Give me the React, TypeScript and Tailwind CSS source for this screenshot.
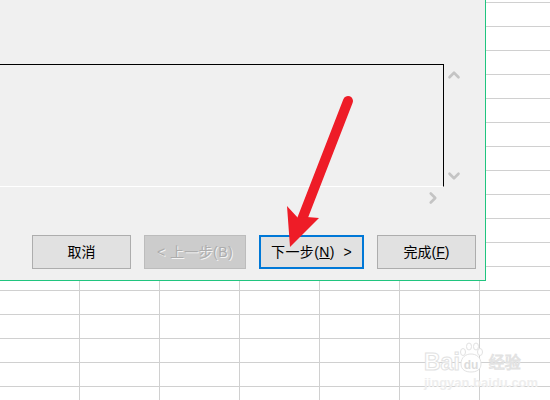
import type { ReactNode } from 'react';
import { ChevronDown, ChevronRight, ChevronUp } from 'lucide-react';

const cells = Array.from({ length: 7 * 18 });

function WizardButton({ children, className }: { children: ReactNode; className: string }) {
  return (
    <button type="button" className={`flex h-[34px] items-center justify-center text-[14px] ${className}`}>
      {children}
    </button>
  );
}

export default function App() {
  return (
    <div className="relative h-[400px] w-[550px] overflow-hidden bg-white font-['Liberation_Sans','Noto_Sans_CJK_SC',sans-serif]">
      {/* spreadsheet behind the dialog */}
      <div className="grid grid-cols-[repeat(7,80px)] grid-rows-[3px_repeat(17,24px)]">
        {cells.map((_, i) => (
          <div key={i} className="border-r border-b border-[#d0d0d0]" />
        ))}
      </div>

      {/* wizard dialog */}
      <div className="absolute top-0 left-0 flex h-[281px] w-[486px] flex-col border-r border-b border-[#20c57f] bg-[#f0f0f0] pt-[64px]">
        <div className="flex">
          <div className="h-[123px] w-[444px] border-t border-r border-b border-t-black border-r-black border-b-white" />
          <div className="flex h-[123px] w-[20px] flex-col items-center justify-between pt-[2px] pb-[2px] text-[#c4c4c4]">
            <ChevronUp size={18} strokeWidth={3.5} />
            <ChevronDown size={18} strokeWidth={3.5} />
          </div>
        </div>
        <div className="flex w-[444px] justify-end pt-[2px] pr-[2px] text-[#c4c4c4]">
          <ChevronRight size={18} strokeWidth={3.5} />
        </div>
        <div className="mt-[28px] flex justify-end gap-[13px] pr-[9px]">
          <WizardButton className="w-[99px] border border-[#adadad] bg-[#e1e1e1] text-black">取消</WizardButton>
          <WizardButton className="w-[102px] border border-[#bcbcbc] bg-[#cccccc] tracking-[0.4px] text-[#adadad] [text-shadow:1px_1px_0_#f4f4f4]">
            &lt; 上一步(B)
          </WizardButton>
          <WizardButton className="w-[105px] border-2 border-[#0078d7] bg-[#e1e1e1] tracking-[0.4px] text-black">
            下一步(<span className="underline">N</span>)&nbsp;&nbsp;&gt;
          </WizardButton>
          <WizardButton className="w-[99px] border border-[#adadad] bg-[#e1e1e1] text-black">
            完成(<span className="underline">F</span>)
          </WizardButton>
        </div>
      </div>

      {/* annotation arrow */}
      <svg className="absolute top-0 left-0" width="550" height="400" viewBox="0 0 550 400">
        <path d="M348 101 L301 222" stroke="#ee1c27" strokeWidth="10" strokeLinecap="round" fill="none" />
        <polygon points="287,206 298,218 307,217 319,218 290,247" fill="#ee1c27" />
      </svg>

      {/* watermark */}
      <div className="absolute top-[342px] left-[424px] flex flex-col items-start text-white">
        <div className="flex items-end">
          <span className="text-[23px] leading-[24px] font-bold [-webkit-text-stroke:1px_#e2e2e2]">Bai</span>
          <svg width="24" height="32" viewBox="0 0 24 32" className="-ml-[1px]" fill="#ffffff" stroke="#e2e2e2">
            <path d="M2 22 C2 15 7 12 12 12 C17 12 22 15 22 22 C22 28 17 30 12 30 C7 30 2 28 2 22 Z" />
            <ellipse cx="4" cy="10" rx="2.5" ry="3.5" />
            <ellipse cx="10" cy="4.5" rx="2.5" ry="3.5" />
            <ellipse cx="17" cy="4.5" rx="2.5" ry="3.5" />
            <ellipse cx="21" cy="10" rx="2.5" ry="3.5" />
            <text x="12" y="27" fontSize="12" fontWeight="700" textAnchor="middle" fill="#dcdcdc" stroke="none">du</text>
          </svg>
          <span className="ml-[6px] text-[16px] leading-[22px] [-webkit-text-stroke:1px_#e2e2e2]">经验</span>
        </div>
        <span className="mt-[2px] text-[13px] leading-[14px] font-bold text-[#eeeeee]">jingyan.baidu.com</span>
      </div>
    </div>
  );
}
